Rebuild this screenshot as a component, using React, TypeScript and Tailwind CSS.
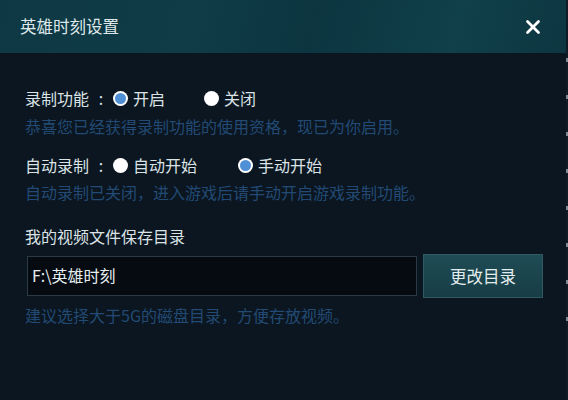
import { X } from 'lucide-react';

const font = { fontFamily: '"Noto Sans CJK SC", "Microsoft YaHei", sans-serif' };

function Radio({ checked, label }: { checked: boolean; label: string }) {
  return (
    <span className="flex items-center gap-[5px]">
      {checked ? (
        <span className="w-[15px] h-[15px] rounded-full bg-white flex items-center justify-center">
          <span className="w-[11px] h-[11px] rounded-full bg-[#4f8fd6]" />
        </span>
      ) : (
        <span className="w-[15px] h-[15px] rounded-full bg-white" />
      )}
      <span>{label}</span>
    </span>
  );
}

function Label({ text }: { text: string }) {
  return (
    <span className="flex">
      {text}
      <span className="w-[24px] text-center">:</span>
    </span>
  );
}

export default function App() {
  return (
    <div className="w-[568px] h-[400px] flex bg-[#0b1620] overflow-hidden" style={font}>
      <div className="flex-1 flex flex-col">
        {/* Title bar */}
        <div className="h-[53px] flex items-center justify-between pl-[20px] pr-[22px] bg-[linear-gradient(105deg,#0e3844_0%,#0f3c47_35%,#0c3540_55%,#10404a_80%,#0d3641_100%)]">
          <span className="text-[16.5px] text-[#dfe8ea]">英雄时刻设置</span>
          <X size={22} strokeWidth={3} className="text-white" />
        </div>

        {/* Body */}
        <div className="flex flex-col pl-[25px] pr-[23px] pt-[35px] text-[16px] leading-[20px]">
          <div className="flex items-center text-[#dce3e7]">
            <Label text="录制功能" />
            <Radio checked label="开启" />
            <span className="w-[39px]" />
            <Radio checked={false} label="关闭" />
          </div>
          <p className="mt-[8px] text-[#224a74]">恭喜您已经获得录制功能的使用资格，现已为你启用。</p>

          <div className="flex items-center text-[#dce3e7] mt-[19px]">
            <Label text="自动录制" />
            <Radio checked={false} label="自动开始" />
            <span className="w-[41px]" />
            <Radio checked label="手动开始" />
          </div>
          <p className="mt-[7px] text-[#224a74]">自动录制已关闭，进入游戏后请手动开启游戏录制功能。</p>

          <p className="mt-[24px] text-[#dce3e7]">我的视频文件保存目录</p>
          <div className="flex items-center gap-[6px] mt-[8px] pl-[2px]">
            <div className="w-[390px] h-[40px] flex items-center px-[4px] pb-[3px] bg-[#050b11] border border-[#2b3b45] text-[#e6eef0]">
              F:\英雄时刻
            </div>
            <button className="w-[120px] h-[44px] bg-[linear-gradient(180deg,#1f4c55,#173d45)] border border-[#2f5a62] text-[#e3ecee] text-[16.5px]">
              更改目录
            </button>
          </div>
          <p className="mt-[7px] text-[#224a74]">建议选择大于5G的磁盘目录，方便存放视频。</p>
        </div>
      </div>

      {/* Edge of window behind */}
      <div className="w-[2px] flex flex-col pt-[58px] gap-[33px] bg-[#101c25]">
        {Array.from({ length: 8 }).map((_, i) => (
          <span key={i} className="w-[2px] h-[4px] bg-[#7d8a92]" />
        ))}
      </div>
    </div>
  );
}
